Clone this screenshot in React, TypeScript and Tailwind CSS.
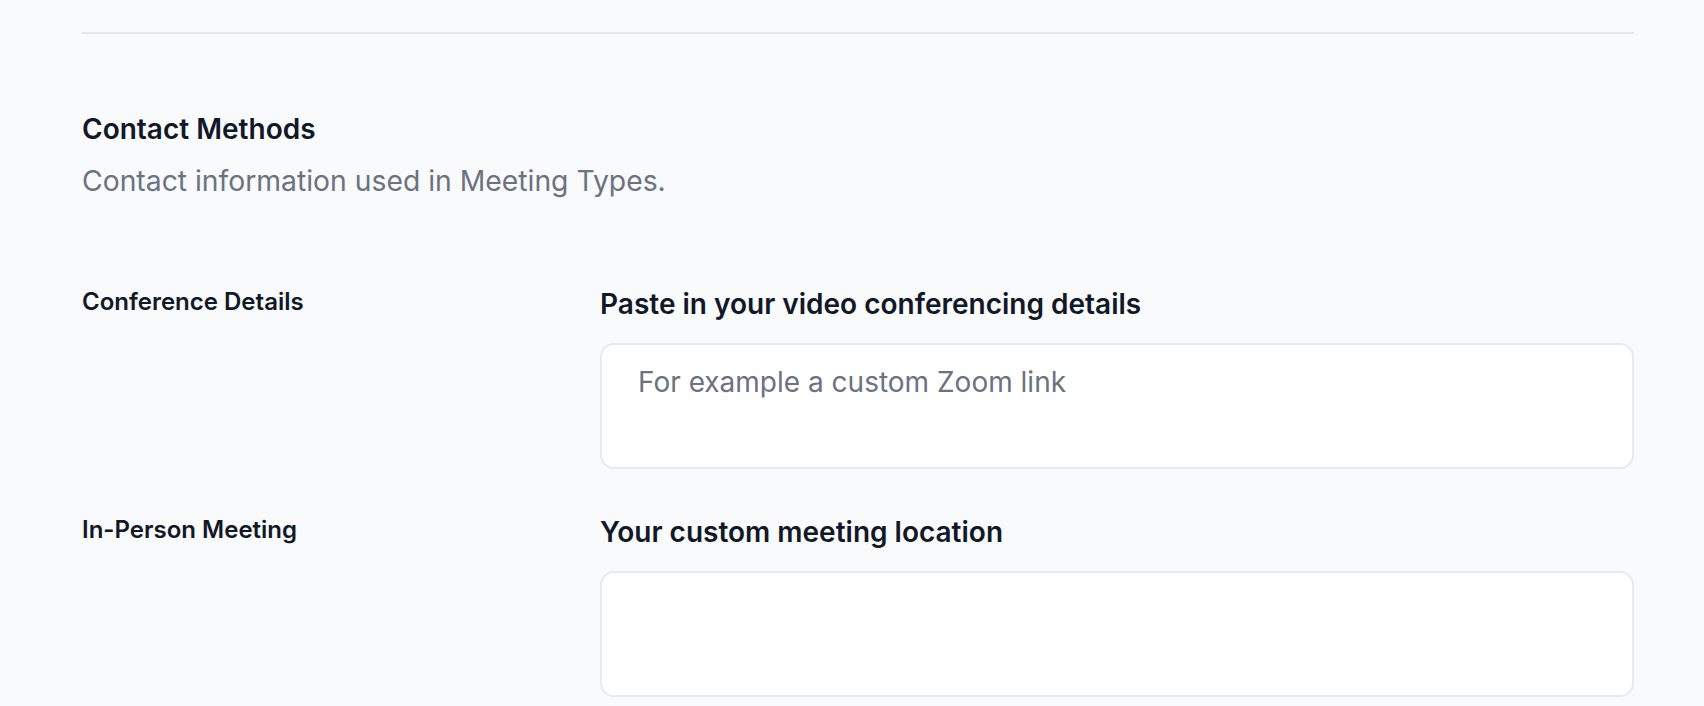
export default function App() {
  const rows = [
    {
      label: 'Conference Details',
      title: 'Paste in your video conferencing details',
      placeholder: 'For example a custom Zoom link',
    },
    {
      label: 'In-Person Meeting',
      title: 'Your custom meeting location',
      placeholder: '',
    },
  ]

  return (
    <div
      className="min-h-screen bg-[#f9fafb] pl-[82px] pr-[70px] pt-[32px] text-[#111827]"
      style={{ fontFamily: 'Inter, "Noto Sans", sans-serif' }}
    >
      <div className="h-[2px] bg-[#e5e7eb]" />

      <div className="mt-[75px]">
        <h2 className="text-[28px] leading-[40px] font-semibold">Contact Methods</h2>
        <p className="mt-[12px] text-[28.3px] leading-[40px] text-[#6b7280]">
          Contact information used in Meeting Types.
        </p>
      </div>

      <div className="mt-[83px] flex flex-col gap-[43px]">
        {rows.map(row => (
          <div key={row.label} className="flex">
            <div className="w-[518px] shrink-0 text-[24px] leading-[36px] font-semibold">
              {row.label}
            </div>
            <div className="flex-1">
              <div className="text-[28px] leading-[40px] font-semibold">{row.title}</div>
              <textarea
                className="mt-[19px] block h-[126px] w-full resize-none rounded-[14px] border-2 border-[#e9eaed] bg-white px-[36px] py-[17px] text-[28px] leading-[40px] text-[#111827] outline-none placeholder:text-[#6b7280]"
                placeholder={row.placeholder}
              />
            </div>
          </div>
        ))}
      </div>
    </div>
  )
}
